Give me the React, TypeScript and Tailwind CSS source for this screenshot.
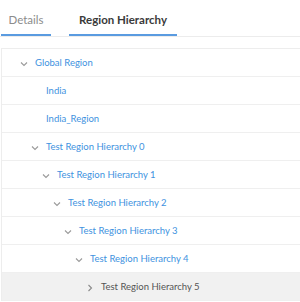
import React from 'react';

type Node = { label: string; depth: number; open?: boolean; leaf?: boolean; active?: boolean };

const nodes: Node[] = [
  { label: 'Global Region', depth: 0, open: true },
  { label: 'India', depth: 1, leaf: true },
  { label: 'India_Region', depth: 1, leaf: true },
  { label: 'Test Region Hierarchy 0', depth: 1, open: true },
  { label: 'Test Region Hierarchy 1', depth: 2, open: true },
  { label: 'Test Region Hierarchy 2', depth: 3, open: true },
  { label: 'Test Region Hierarchy 3', depth: 4, open: true },
  { label: 'Test Region Hierarchy 4', depth: 5, open: true },
  { label: 'Test Region Hierarchy 5', depth: 6, active: true },
];

function Chevron({ open }: { open?: boolean }) {
  return (
    <svg width="8" height="8" viewBox="0 0 8 8" className="shrink-0">
      {open ? (
        <polyline points="1,2.5 4,5.5 7,2.5" fill="none" stroke="#9a9a9a" strokeWidth="1.1" />
      ) : (
        <polyline points="2.5,1 5.5,4 2.5,7" fill="none" stroke="#8a8a8a" strokeWidth="1.1" />
      )}
    </svg>
  );
}

export default function App() {
  return (
    <div className="w-[300px] h-[302px] overflow-hidden bg-white" style={{ fontFamily: 'Lato, "Open Sans", sans-serif' }}>
      {/* Tabs */}
      <div className="flex items-end h-[37px] border-b border-[#ececec] pl-[1px]">
        <div className="w-[50px] h-full flex items-center justify-center border-b-2 border-[#5a9be0] text-[11.5px] text-[#8c8c8c] pt-[6px]">
          Details
        </div>
        <div className="ml-[18px] w-[108px] h-full flex items-center justify-center border-b-2 border-[#5a9be0] text-[11.5px] font-bold text-[#3a3a3a] pt-[6px]">
          Region Hierarchy
        </div>
      </div>

      {/* Tree */}
      <div className="mt-[11px] ml-[1px] border-t border-l border-[#ededed]">
        {nodes.map((n, i) => (
          <div
            key={i}
            className={
              'flex items-center h-[28px] border-b border-[#efefef] text-[9.5px] pt-[2px] ' +
              (n.active ? 'bg-[#f1f1f1] text-[#555555]' : 'text-[#4192e0]')
            }
            style={{ paddingLeft: 18 + n.depth * 11 }}
          >
            <span className="w-[15px] flex items-center">{!n.leaf && <Chevron open={n.open} />}</span>
            <span>{n.label}</span>
          </div>
        ))}
      </div>
    </div>
  );
}
